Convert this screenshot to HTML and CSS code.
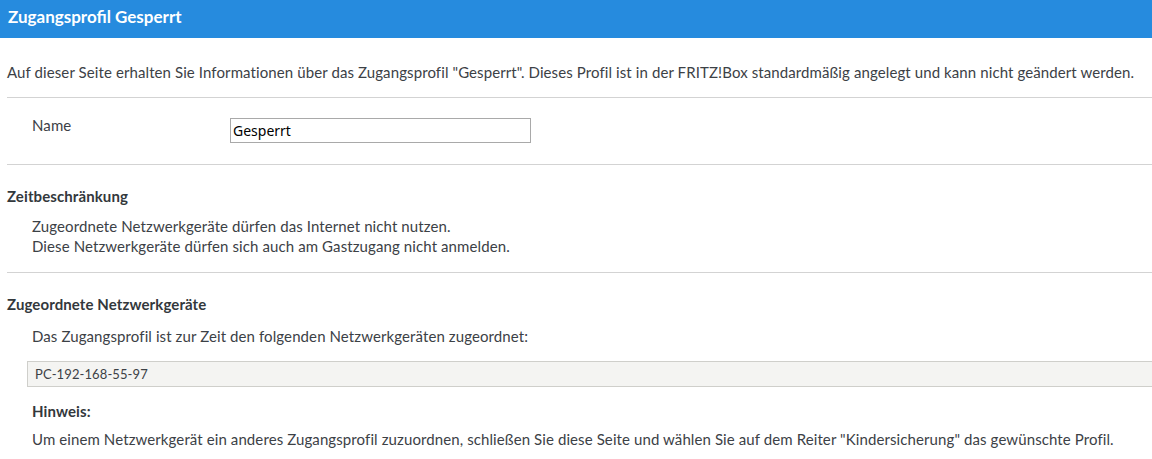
FILE: index.html
```html
<!DOCTYPE html>
<html lang="de">
<head>
<meta charset="utf-8">
<title>Zugangsprofil Gesperrt</title>
<link rel="stylesheet" href="styles.css">
</head>
<body>
<div class="header">Zugangsprofil Gesperrt</div>
<div class="page">
  <p class="intro">Auf dieser Seite erhalten Sie Informationen über das Zugangsprofil "Gesperrt". Dieses Profil ist in der FRITZ!Box standardmäßig angelegt und kann nicht geändert werden.</p>
  <hr class="sep">
  <div class="name-row">
    <label class="name-label" for="name">Name</label>
    <input class="name-input" id="name" type="text" value="Gesperrt">
  </div>
  <hr class="sep">
  <h2 class="sec-title">Zeitbeschränkung</h2>
  <div class="indent sec-body">
    <p class="line">Zugeordnete Netzwerkgeräte dürfen das Internet nicht nutzen.</p>
    <p class="line">Diese Netzwerkgeräte dürfen sich auch am Gastzugang nicht anmelden.</p>
  </div>
  <hr class="sep sep-after">
  <h2 class="sec-title">Zugeordnete Netzwerkgeräte</h2>
  <p class="indent line devices-intro">Das Zugangsprofil ist zur Zeit den folgenden Netzwerkgeräten zugeordnet:</p>
  <div class="device-box">PC-192-168-55-97</div>
  <p class="indent line hint-title">Hinweis:</p>
  <p class="indent line hint-text">Um einem Netzwerkgerät ein anderes Zugangsprofil zuzuordnen, schließen Sie diese Seite und wählen Sie auf dem Reiter "Kindersicherung" das gewünschte Profil.</p>
</div>
</body>
</html>
```

FILE: styles.css
```css
html, body {
  margin: 0;
  padding: 0;
  background: #ffffff;
  overflow: hidden;
}
body {
  font-family: Lato, "Noto Sans", sans-serif;
  font-size: 15px;
  letter-spacing: 0.1px;
  color: #3c4146;
  width: 1152px;
}
.header {
  height: 38px;
  box-sizing: border-box;
  background: #268bde;
  color: #ffffff;
  font-size: 17px;
  font-weight: 700;
  letter-spacing: 0;
  line-height: 34px;
  padding-left: 8px;
}
.page {
  padding-left: 7px;
}
p, h2 {
  margin: 0;
}
.intro {
  margin-top: 24px;
  line-height: 20px;
  white-space: nowrap;
}
.sep {
  border: 0;
  border-top: 1px solid #d3d3d3;
  margin: 15px 0 0;
  height: 0;
}
.name-row {
  display: flex;
  align-items: flex-start;
  padding: 17px 0 21px 25px;
}
.name-label {
  width: 198px;
  line-height: 20px;
}
.name-input {
  margin: 3px 0 0;
  width: 301px;
  height: 25px;
  box-sizing: border-box;
  border: 1px solid #a9a9a9;
  padding: 0 2px;
  font-family: "Noto Sans", "Open Sans", sans-serif;
  font-size: 14px;
  letter-spacing: 0;
  color: #000;
  outline: none;
}
.name-row + .sep {
  margin-top: 0;
}
.sec-title {
  margin-top: 21px;
  font-size: 15px;
  font-weight: 700;
  line-height: 20px;
  color: #33383c;
}
.indent {
  padding-left: 25px;
}
.line {
  line-height: 20px;
}
.sec-body {
  margin-top: 10px;
}
.sep-after {
  margin-top: 16px;
}
.devices-intro {
  margin-top: 12px;
}
.device-box {
  margin: 15px 0 0 20px;
  height: 26px;
  box-sizing: border-box;
  background: #f4f4f2;
  border: 1px solid #cfcfcb;
  border-right: 0;
  padding-left: 7px;
  line-height: 24px;
  font-size: 13px;
}
.hint-title {
  margin-top: 14px;
  font-weight: 700;
  color: #33383c;
}
.hint-text {
  margin-top: 8px;
  white-space: nowrap;
}
```
